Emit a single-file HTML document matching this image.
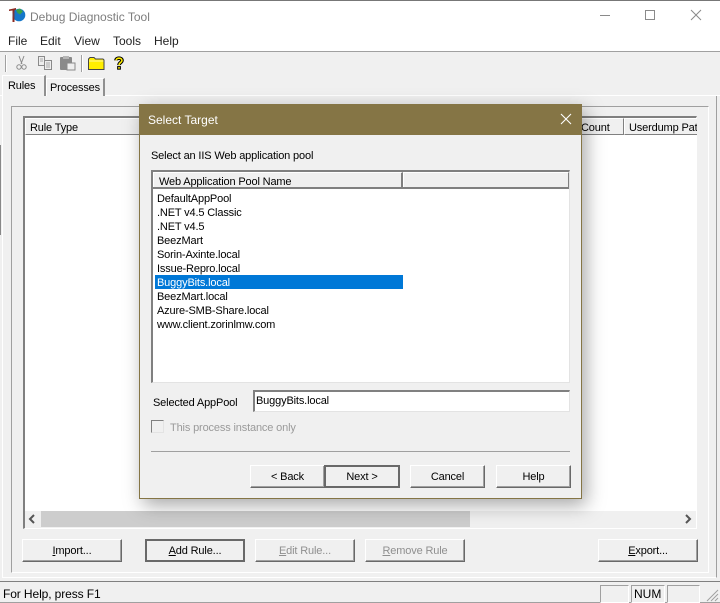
<!DOCTYPE html>
<html>
<head>
<meta charset="utf-8">
<style>
html,body{margin:0;padding:0;width:720px;height:603px;overflow:hidden;background:#f0f0f0}
*{box-sizing:border-box}
body{position:relative;font-family:"Liberation Sans",sans-serif;font-size:11px;letter-spacing:-.15px;color:#000}
.a{position:absolute}
.t{position:absolute;white-space:nowrap;line-height:14px}
.btn{position:absolute;background:#f0f0f0;border:1px solid;border-color:#fff #696969 #696969 #fff;box-shadow:inset -1px -1px 0 #a0a0a0;text-align:center;font-size:11px;line-height:22px;white-space:nowrap}
.def{border:2px solid #696969;box-shadow:none;line-height:20px}
.dis{color:#8f8f8f}
.hd{position:absolute;background:#f0f0f0;border:1px solid;border-color:#fff #808080 #808080 #fff;line-height:18px;padding-left:5px;white-space:nowrap;overflow:hidden}
.li{position:absolute;left:157px;white-space:nowrap;line-height:14px;height:14px}
.m{letter-spacing:0}
</style>
</head>
<body>
<!-- title + menu -->
<div class="a" style="left:0;top:0;width:720px;height:52px;background:#fff;border-top:1px solid #777"></div>
<div class="a" style="left:0;top:51px;width:720px;height:1px;background:#a0a0a0"></div>
<div class="a" style="left:0;top:145px;width:1px;height:90px;background:#888"></div>
<svg class="a" style="left:8px;top:7px" width="20" height="18" viewBox="0 0 20 18">
<path d="M1 2.500L8 1v2L6.500 3.500V15H4.500V3.500L1 4z" fill="#8c2a20"/>
<circle cx="11" cy="8" r="6.300" fill="#1677c9"/>
<path d="M8 3l4-1.500 3 3-3 3-2.500-1.500z" fill="#3aa14a"/>
<path d="M5 3h1.500v12H4.500z" fill="#8c2a20" opacity=".8"/>
</svg>
<div class="t m" style="left:30px;top:10px;color:#7d7d7d;font-size:12px">Debug Diagnostic Tool</div>
<div class="a" style="left:600px;top:15px;width:10px;height:1px;background:#8a8a8a"></div>
<div class="a" style="left:645px;top:10px;width:10px;height:10px;border:1px solid #8a8a8a"></div>
<svg class="a" style="left:690px;top:9px" width="12" height="12" viewBox="0 0 12 12"><path d="M1 1l10 10M11 1L1 11" stroke="#8a8a8a" stroke-width="1" fill="none"/></svg>
<div class="t m" style="left:8px;top:34px;font-size:12px;color:#222">File</div>
<div class="t m" style="left:40px;top:34px;font-size:12px;color:#222">Edit</div>
<div class="t m" style="left:74px;top:34px;font-size:12px;color:#222">View</div>
<div class="t m" style="left:113px;top:34px;font-size:12px;color:#222">Tools</div>
<div class="t m" style="left:154px;top:34px;font-size:12px;color:#222">Help</div>

<!-- toolbar -->
<div class="a" style="left:5px;top:55px;width:2px;height:17px;border-left:1px solid #a0a0a0;border-right:1px solid #fff"></div>
<svg class="a" style="left:15px;top:55px" width="13" height="16" viewBox="0 0 13 16"><path d="M4 1l3 8M9 1L6 9" stroke="#8a8a8a" fill="none"/><circle cx="4" cy="12" r="2.200" stroke="#8a8a8a" fill="none"/><circle cx="9" cy="12" r="2.200" stroke="#8a8a8a" fill="none"/></svg>
<svg class="a" style="left:37px;top:55px" width="16" height="15" viewBox="0 0 16 15"><path d="M1.500 1.500h6v9h-6zM7.500 5.500h7v9h-7z" fill="#eee" stroke="#8a8a8a"/><path d="M3 4h3M3 6h3M9 8h4M9 10h4M9 12h4" stroke="#aaa"/></svg>
<svg class="a" style="left:59px;top:55px" width="17" height="16" viewBox="0 0 17 16"><rect x="1" y="2" width="12" height="13" rx="1" fill="#8a8a8a"/><rect x="4" y="1" width="6" height="3" fill="#b5b5b5"/><rect x="8" y="8" width="8" height="7" fill="#eee" stroke="#8a8a8a"/></svg>
<div class="a" style="left:81px;top:55px;width:2px;height:17px;border-left:1px solid #a0a0a0;border-right:1px solid #fff"></div>
<svg class="a" style="left:88px;top:57px" width="17" height="13" viewBox="0 0 17 13"><path d="M.5 12.500V2L2 .5h4L7.500 2H15l1 1v9.500z" fill="#ffee00" stroke="#444"/><path d="M1 4h14.500" stroke="#fff8a0"/></svg>
<svg class="a" style="left:113px;top:56px" width="12" height="14" viewBox="0 0 14 16"><path d="M3.500 5C3.500 1.500 10.500 1.500 10.500 5C10.500 7.500 7 7.500 7 10.500" fill="none" stroke="#000" stroke-width="4.200"/><rect x="4.800" y="11.600" width="4.400" height="4.200" fill="#000"/><path d="M3.500 5C3.500 1.500 10.500 1.500 10.500 5C10.500 7.500 7 7.500 7 10.500" fill="none" stroke="#ffee00" stroke-width="1.800"/><rect x="6" y="12.800" width="2" height="1.800" fill="#ffee00"/></svg>

<!-- tabs -->
<div class="a" style="left:0;top:95px;width:720px;height:1px;background:#fff"></div>
<div class="a" style="left:46px;top:78px;width:59px;height:18px;background:#f0f0f0;border:1px solid;border-width:1px 2px 0 1px;border-color:#fff #909090 transparent #fff"></div>
<div class="t" style="left:50px;top:81px">Processes</div>
<div class="a" style="left:2px;top:75px;width:44px;height:21px;background:#f0f0f0;border:1px solid;border-width:1px 2px 0 1px;border-color:#fff #909090 #f0f0f0 #fff"></div>
<div class="t" style="left:8px;top:79px">Rules</div>

<!-- tab frame -->
<div class="a" style="left:2px;top:96px;width:715px;height:482px;border-left:1px solid #fff;border-right:1px solid #a0a0a0;border-bottom:1px solid #fff"></div>
<div class="a" style="left:11px;top:106px;width:698px;height:467px;border:1px solid;border-color:#a0a0a0 #fff #fff #a0a0a0"></div>

<!-- list -->
<div class="a" style="left:23px;top:116px;width:674px;height:413px;background:#fff;border-style:solid;border-width:2px 1px 1px 2px;border-color:#808080 #fff #fff #808080"></div>
<div class="hd" style="left:25px;top:118px;width:599px;height:17px;padding-left:4px">Rule Type</div>
<div class="hd" style="left:540px;top:118px;width:84px;height:17px;padding-left:41px;border-left:none">Count</div>
<div class="hd" style="left:624px;top:118px;width:73px;height:17px;padding-left:4px;border-right:none">Userdump Pat</div>
<div class="a" style="left:25px;top:511px;width:671px;height:17px;background:#f0f0f0"></div>
<div class="a" style="left:41px;top:511px;width:429px;height:16px;background:#cdcdcd"></div>
<svg class="a" style="left:28px;top:514px" width="8" height="10" viewBox="0 0 8 10"><path d="M6 1L2 5l4 4" stroke="#555" stroke-width="2" fill="none"/></svg>
<svg class="a" style="left:684px;top:514px" width="8" height="10" viewBox="0 0 8 10"><path d="M2 1l4 4-4 4" stroke="#555" stroke-width="2" fill="none"/></svg>

<!-- bottom buttons -->
<div class="btn" style="left:22px;top:539px;width:100px;height:23px"><u>I</u>mport...</div>
<div class="btn def" style="left:145px;top:539px;width:100px;height:23px"><u>A</u>dd Rule...</div>
<div class="btn dis" style="left:255px;top:539px;width:100px;height:23px"><u>E</u>dit Rule...</div>
<div class="btn dis" style="left:365px;top:539px;width:100px;height:23px"><u>R</u>emove Rule</div>
<div class="btn" style="left:598px;top:539px;width:100px;height:23px"><u>E</u>xport...</div>

<!-- status bar -->
<div class="a" style="left:0;top:581px;width:720px;height:22px;border-top:1px solid #808080;border-bottom:1px solid #a0a0a0"></div>
<div class="t m" style="left:3px;top:587px;font-size:12px;letter-spacing:-.1px">For Help, press F1</div>
<div class="a" style="left:600px;top:585px;width:29px;height:18px;border:1px solid;border-color:#a0a0a0 #fff #fff #a0a0a0"></div>
<div class="a" style="left:631px;top:585px;width:34px;height:18px;border:1px solid;border-color:#a0a0a0 #fff #fff #a0a0a0"></div>
<div class="t m" style="left:634px;top:587px;font-size:12px">NUM</div>
<div class="a" style="left:667px;top:585px;width:33px;height:18px;border:1px solid;border-color:#a0a0a0 #fff #fff #a0a0a0"></div>
<svg class="a" style="left:706px;top:589px" width="13" height="13" viewBox="0 0 13 13"><path d="M12 1L1 12M12 5l-7 7M12 9l-3 3" stroke="#a0a0a0" fill="none"/></svg>

<!-- dialog -->
<div class="a" style="left:139px;top:104px;width:443px;height:395px;background:#f0f0f0;border:1px solid #857545;border-top:none;box-shadow:4px 6px 18px rgba(0,0,0,.35)"></div>
<div class="a" style="left:139px;top:104px;width:443px;height:31px;background:#857545"></div>
<div class="t m" style="left:148px;top:113px;color:#fff;font-size:12px">Select Target</div>
<svg class="a" style="left:560px;top:113px" width="12" height="12" viewBox="0 0 12 12"><path d="M1 1l10 10M11 1L1 11" stroke="#fff" stroke-width="1.100" fill="none"/></svg>
<div class="t" style="left:151px;top:149px">Select an IIS Web application pool</div>

<div class="a" style="left:151px;top:170px;width:419px;height:213px;background:#fff;border-style:solid;border-width:2px 1px 1px 2px;border-color:#808080 #e3e3e3 #e3e3e3 #808080"></div>
<div class="hd" style="left:153px;top:172px;width:250px;height:17px;border-right:2px solid #808080">Web Application Pool Name</div>
<div class="hd" style="left:403px;top:172px;width:166px;height:17px"></div>
<div class="a" style="left:153px;top:187px;width:416px;height:2px;background:#808080"></div>
<div class="a" style="left:155px;top:275px;width:248px;height:14px;background:#0078d7"></div>
<div class="li" style="top:192px">DefaultAppPool</div>
<div class="li" style="top:206px">.NET v4.5 Classic</div>
<div class="li" style="top:220px">.NET v4.5</div>
<div class="li" style="top:234px">BeezMart</div>
<div class="li" style="top:248px">Sorin-Axinte.local</div>
<div class="li" style="top:262px">Issue-Repro.local</div>
<div class="li" style="top:276px;color:#fff">BuggyBits.local</div>
<div class="li" style="top:290px">BeezMart.local</div>
<div class="li" style="top:304px">Azure-SMB-Share.local</div>
<div class="li" style="top:318px">www.client.zorinlmw.com</div>

<div class="t" style="left:153px;top:396px">Selected AppPool</div>
<div class="a" style="left:253px;top:390px;width:317px;height:22px;background:#fff;border-style:solid;border-width:2px 1px 1px 2px;border-color:#808080 #e3e3e3 #e3e3e3 #808080"></div>
<div class="t" style="left:256px;top:394px">BuggyBits.local</div>
<div class="a" style="left:151px;top:420px;width:13px;height:13px;background:#f0f0f0;border:1px solid;border-color:#808080 #e3e3e3 #e3e3e3 #808080"></div>
<div class="t dis" style="left:170px;top:421px;color:#9a9a9a">This process instance only</div>
<div class="a" style="left:151px;top:451px;width:419px;height:1px;background:#a0a0a0"></div>

<div class="btn" style="left:250px;top:465px;width:75px;height:23px">&lt; Back</div>
<div class="btn def" style="left:324px;top:465px;width:76px;height:23px">Next &gt;</div>
<div class="btn" style="left:410px;top:465px;width:75px;height:23px">Cancel</div>
<div class="btn" style="left:496px;top:465px;width:75px;height:23px">Help</div>
</body>
</html>
